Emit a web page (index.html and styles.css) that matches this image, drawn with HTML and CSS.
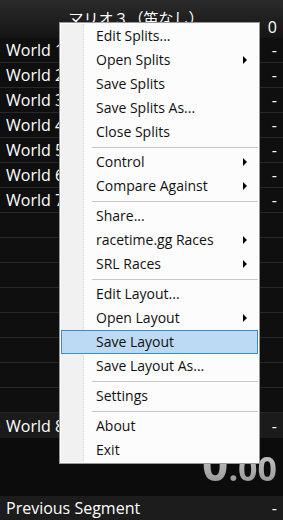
FILE: index.html
```html
<!DOCTYPE html>
<html lang="en">
<head>
    <meta charset="UTF-8">
    <meta name="viewport" content="width=device-width, initial-scale=1.0">
    <title>LiveSplit</title>
    <link rel="stylesheet" href="styles.css">
</head>
<body>
    <div class="app">
        <div class="title">
            <span class="game">マリオ３（笛なし）</span>
            <span class="attempts">0</span>
        </div>

        <div class="splits">
            <div class="split"><span>World 1</span><span>-</span></div>
            <div class="split"><span>World 2</span><span>-</span></div>
            <div class="split"><span>World 3</span><span>-</span></div>
            <div class="split"><span>World 4</span><span>-</span></div>
            <div class="split"><span>World 5</span><span>-</span></div>
            <div class="split"><span>World 6</span><span>-</span></div>
            <div class="split"><span>World 7</span><span>-</span></div>
            <div class="split"></div>
            <div class="split"></div>
            <div class="split"></div>
            <div class="split"></div>
            <div class="split"></div>
            <div class="split"></div>
            <div class="split"></div>
            <div class="split"></div>
            <div class="split last"><span>World 8</span><span>-</span></div>
        </div>

        <div class="timer"><span class="sec">0</span><span class="frac">.00</span></div>

        <div class="prev"><span>Previous Segment</span><span>-</span></div>

        <!-- right-click context menu -->
        <ul class="menu">
            <li>Edit Splits...</li>
            <li class="sub">Open Splits</li>
            <li>Save Splits</li>
            <li>Save Splits As...</li>
            <li>Close Splits</li>
            <li class="sep"></li>
            <li class="sub">Control</li>
            <li class="sub">Compare Against</li>
            <li class="sep"></li>
            <li>Share...</li>
            <li class="sub">racetime.gg Races</li>
            <li class="sub">SRL Races</li>
            <li class="sep"></li>
            <li>Edit Layout...</li>
            <li class="sub">Open Layout</li>
            <li class="active">Save Layout</li>
            <li>Save Layout As...</li>
            <li class="sep"></li>
            <li>Settings</li>
            <li class="sep"></li>
            <li>About</li>
            <li>Exit</li>
        </ul>
    </div>
</body>
</html>
```

FILE: styles.css
```css
body { margin: 0; background-color: #0c0c0c; font-family: 'Open Sans', 'Noto Sans', sans-serif; color: #fff; }
.app { position: relative; width: 283px; height: 520px; overflow: hidden; }

.title {
    height: 38px;
    background: linear-gradient(#2b2b2b, #141414);
    position: relative;
}
.game {
    display: block;
    text-align: center;
    padding-right: 11px;
    padding-top: 7px;
    font-family: 'Noto Sans CJK JP', sans-serif;
    font-size: 15px;
    line-height: 22px;
}
.attempts { position: absolute; right: 6px; top: 16px; font-size: 16px; line-height: 22px; }

.splits { background-color: #0f0f0f; }
.split {
    height: 25px;
    box-sizing: border-box;
    border-bottom: 1px solid #282828;
    display: flex;
    justify-content: space-between;
    align-items: center;
    padding: 0 6px;
    font-size: 16px;
}
.split.last { background-color: #1b1b1b; border-bottom: none; }

.timer {
    height: 58px;
    box-sizing: border-box;
    padding: 0 6px;
    display: flex;
    justify-content: flex-end;
    align-items: baseline;
    line-height: 50px;
    font-family: 'Open Sans', sans-serif;
    font-weight: 700;
    background: linear-gradient(#dcdcdc, #858585);
    -webkit-background-clip: text;
    background-clip: text;
    color: transparent;
}
.timer .sec { font-size: 46px; }
.timer .frac { font-size: 34px; }

.prev {
    height: 24px;
    background-color: #1c1c1c;
    display: flex;
    justify-content: space-between;
    align-items: center;
    padding: 0 6px;
    font-size: 16px;
}

.menu {
    position: absolute;
    left: 59px;
    top: 22px;
    width: 197px;
    margin: 0;
    padding: 1px;
    list-style: none;
    background-color: #fcfcfc;
    border: 1px solid #979797;
    color: #111;
    font-size: 14px;
}
.menu::before {
    content: '';
    position: absolute;
    left: 1px;
    top: 1px;
    bottom: 1px;
    width: 22px;
    background-color: #f1f1f1;
    border-right: 1px dotted #d8d8d8;
}
.menu li {
    position: relative;
    height: 24px;
    line-height: 23px;
    padding-left: 35px;
    box-sizing: border-box;
}
.menu li.sep { height: 6px; padding: 0; }
.menu li.sep::before {
    content: '';
    position: absolute;
    left: 31px;
    right: 0;
    top: 3px;
    border-top: 1px solid #c8c8c8;
}
.menu li.sub::after {
    content: '';
    position: absolute;
    right: 11px;
    top: 8px;
    border-left: 4px solid #000;
    border-top: 4px solid transparent;
    border-bottom: 4px solid transparent;
}
.menu li.active { background-color: #bcdaf3; border: 1px solid #3a8cd6; padding-left: 34px; line-height: 21px; }
```
